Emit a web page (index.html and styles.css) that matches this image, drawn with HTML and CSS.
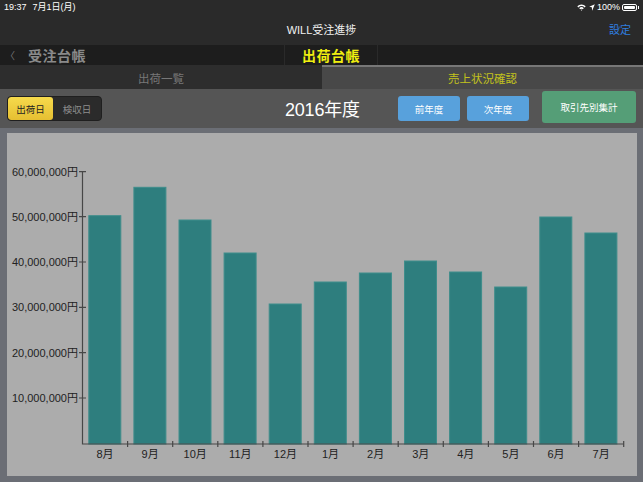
FILE: index.html
```html
<!DOCTYPE html>
<html lang="ja">
<head>
<meta charset="utf-8">
<title>WILL受注進捗</title>
<link rel="stylesheet" href="styles.css">
</head>
<body>
<div class="app">
  <header class="nav">
    <div class="status">
      <span class="time">19:37</span>
      <span class="date">7月1日(月)</span>
      <div class="status-right">
        <svg class="wifi" width="9" height="7" viewBox="0 0 9 7"><path d="M0.3 2.3 A6 6 0 0 1 8.7 2.3 L7.6 3.4 A4.4 4.4 0 0 0 1.4 3.4 Z M2.2 4.2 A3.3 3.3 0 0 1 6.8 4.2 L5.7 5.3 A1.8 1.8 0 0 0 3.3 5.3 Z M3.8 5.9 A1 1 0 0 1 5.2 5.9 L4.5 6.8 Z" fill="#fff"/></svg>
        <svg class="loc" width="6" height="7" viewBox="0 0 6 7"><path d="M5.8 0.2 L0.2 2.8 L2.8 3.2 L3.2 6.8 Z" fill="#fff"/></svg>
        <span class="pct">100%</span>
        <span class="battery"><span class="battery-fill"></span></span><span class="nub"></span>
      </div>
    </div>
    <div class="titlebar">
      <span></span>
      <span class="title">WILL受注進捗</span>
      <span class="settings">設定</span>
    </div>
  </header>

  <div class="subbar">
    <div class="back"><span class="chev">〈</span><span class="back-label">受注台帳</span></div>
    <div class="current">出荷台帳</div>
    <div></div>
  </div>

  <div class="tabs">
    <div class="tab">出荷一覧</div>
    <div class="tab active">売上状況確認</div>
  </div>

  <div class="toolbar">
    <div class="segmented">
      <span class="seg on">出荷日</span>
      <span class="seg">検収日</span>
    </div>
    <div class="year">2016年度</div>
    <button class="btn blue prev">前年度</button>
    <button class="btn blue next">次年度</button>
    <button class="btn green sum">取引先別集計</button>
  </div>

  <main class="chart-area">
    <div class="panel">
      <svg class="chart" width="630" height="343" viewBox="7 133 630 343">
        <g class="ylabels" font-size="11" fill="#222" text-anchor="end">
          <text x="78" y="175.7">60,000,000円</text>
          <text x="78" y="220.7">50,000,000円</text>
          <text x="78" y="266">40,000,000円</text>
          <text x="78" y="311.3">30,000,000円</text>
          <text x="78" y="356.7">20,000,000円</text>
          <text x="78" y="402">10,000,000円</text>
        </g>
        <g fill="#2e7e7e" stroke="#3f8d8b" stroke-width="1">
          <rect x="88.8" y="215.7" width="32" height="228.3"/>
          <rect x="133.9" y="187.3" width="32" height="256.7"/>
          <rect x="179" y="220" width="32" height="224"/>
          <rect x="224.1" y="253" width="32" height="191"/>
          <rect x="269.2" y="304" width="32" height="140"/>
          <rect x="314.3" y="282" width="32" height="162"/>
          <rect x="359.4" y="273" width="32" height="171"/>
          <rect x="404.5" y="261" width="32" height="183"/>
          <rect x="449.6" y="272" width="32" height="172"/>
          <rect x="494.7" y="287" width="32" height="157"/>
          <rect x="539.8" y="217" width="32" height="227"/>
          <rect x="584.9" y="233" width="32" height="211"/>
        </g>
        <g stroke="#474747" stroke-width="1.2" fill="none">
          <path d="M82.5 171.7 V444 H623.7"/>
          <path d="M79 171.7 H86 M79 216.7 H86 M79 262 H86 M79 307.3 H86 M79 352.7 H86 M79 398 H86"/>
          <path d="M127.6 441 V447 M172.7 441 V447 M217.8 441 V447 M262.9 441 V447 M308 441 V447 M353.1 441 V447 M398.2 441 V447 M443.3 441 V447 M488.4 441 V447 M533.5 441 V447 M578.6 441 V447 M623.7 441 V447"/>
        </g>
        <g class="xlabels" font-size="11" fill="#222" text-anchor="middle">
          <text x="105" y="457.5">8月</text>
          <text x="150.1" y="457.5">9月</text>
          <text x="195.2" y="457.5">10月</text>
          <text x="240.3" y="457.5">11月</text>
          <text x="285.4" y="457.5">12月</text>
          <text x="330.5" y="457.5">1月</text>
          <text x="375.6" y="457.5">2月</text>
          <text x="420.7" y="457.5">3月</text>
          <text x="465.8" y="457.5">4月</text>
          <text x="510.9" y="457.5">5月</text>
          <text x="556" y="457.5">6月</text>
          <text x="601.1" y="457.5">7月</text>
        </g>
      </svg>
    </div>
  </main>
</div>
</body>
</html>
```

FILE: styles.css
```css
* { box-sizing: border-box; }

html, body {
  margin: 0;
  padding: 0;
}

body {
  width: 643px;
  height: 482px;
  overflow: hidden;
  background: #6b6e75;
  font-family: "Liberation Sans", "Noto Sans CJK JP", sans-serif;
  color: #fff;
}

.app {
  display: flex;
  flex-direction: column;
  height: 482px;
}

/* header */
.nav {
  background: #2a2a2a;
  height: 45px;
}

.status {
  height: 15px;
  display: flex;
  align-items: center;
  padding: 0 4px 0 4px;
  font-size: 9px;
  line-height: 15px;
}

.status .date {
  margin-left: 6px;
}

.status-right {
  margin-left: auto;
  display: flex;
  align-items: center;
}

.wifi { margin-right: 3px; }
.loc { margin-right: 2px; }
.pct { margin-right: 2px; }

.battery {
  display: inline-block;
  width: 15px;
  height: 7px;
  border: 1px solid #fff;
  border-radius: 2px;
  padding: 1px;
}

.battery-fill {
  display: block;
  width: 100%;
  height: 100%;
  background: #fff;
  border-radius: 1px;
}

.nub {
  display: inline-block;
  width: 1.5px;
  height: 3px;
  background: #fff;
  margin-left: 0.5px;
}

.titlebar {
  height: 30px;
  display: grid;
  grid-template-columns: 1fr auto 1fr;
  align-items: center;
  padding: 0 12px 2px 12px;
}

.title {
  font-size: 11px;
  color: #f2f2f2;
}

.settings {
  justify-self: end;
  font-size: 11px;
  color: #2f7fe0;
}

/* sub bar */
.subbar {
  height: 20px;
  background: #1d1d1d;
  display: grid;
  grid-template-columns: 284px 94px 1fr;
  align-items: stretch;
}

.back {
  display: flex;
  align-items: center;
  padding-left: 5px;
  color: #8a8a8a;
}

.chev {
  font-size: 10px;
  width: 23px;
  color: #777;
}

.back-label {
  font-size: 14px;
  font-weight: bold;
  letter-spacing: 0.5px;
}

.current {
  display: flex;
  align-items: center;
  justify-content: center;
  border-left: 1px solid #2a2a2a;
  border-right: 1px solid #2a2a2a;
  color: #f0ef10;
  font-size: 14px;
  font-weight: bold;
  letter-spacing: 0.5px;
}

/* tabs */
.tabs {
  height: 24px;
  display: grid;
  grid-template-columns: 322px 1fr;
}

.tab {
  display: flex;
  align-items: center;
  justify-content: center;
  background: #2d2d2d;
  color: #777;
  font-size: 11.5px;
  padding-top: 2px;
}

.tab.active {
  background: #484848;
  color: #c2c21c;
  border-top: 2px solid #777;
  padding-top: 0;
}

/* toolbar */
.toolbar {
  height: 40px;
  background: #555;
  display: flex;
  align-items: center;
  padding-left: 7px;
}

.segmented {
  flex: 0 0 auto;
  display: flex;
  width: 95px;
  height: 25px;
  margin-top: 1px;
  border: 1px solid #1f1f1f;
  border-radius: 4px;
  background: #2b2b2b;
  overflow: hidden;
}

.seg {
  flex: 1;
  display: flex;
  align-items: center;
  justify-content: center;
  font-size: 9.5px;
  color: #8e8e8e;
}

.seg.on {
  flex: 0 0 45px;
  background: linear-gradient(#f6da4c, #e6bf32);
  color: #222;
  border-radius: 3px;
}

.year {
  flex: 0 0 113px;
  margin-left: 183px;
  font-size: 18px;
  color: #fff;
  white-space: nowrap;
  letter-spacing: -0.2px;
}

.btn {
  flex: 0 0 auto;
  border: none;
  font-family: "Liberation Sans", "Noto Sans CJK JP", sans-serif;
  font-size: 9.5px;
  color: #fff;
  border-radius: 3px;
  padding: 0;
}

.blue {
  background: #58a1dc;
  width: 62px;
  height: 25px;
  margin-top: 1px;
}

.next { margin-left: 7px; }

.green {
  background: #559e77;
  width: 94px;
  height: 32px;
  margin-left: 13px;
  margin-top: -2px;
}

/* chart */
.chart-area {
  flex: 1;
  background: #6b6e75;
  padding: 5px 6px 6px 7px;
}

.panel {
  width: 630px;
  height: 343px;
  background: #acacac;
}

.chart {
  display: block;
  font-family: "Liberation Sans", "Noto Sans CJK JP", sans-serif;
}
```
